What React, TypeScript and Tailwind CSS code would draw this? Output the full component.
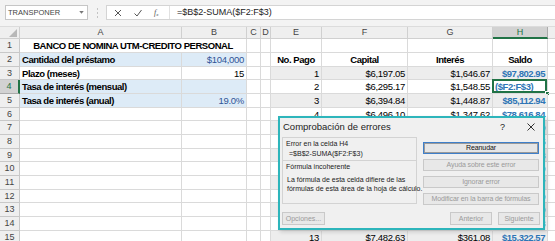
import React from "react";

type Cell = { t?: React.ReactNode; c?: string };

const colW = [
  "w-[20px]",
  "w-[162px]",
  "w-[65px]",
  "w-[14px]",
  "w-[10px]",
  "w-[51px]",
  "w-[86px]",
  "w-[85px]",
  "w-[55px]",
  "w-[60px]",
];
// last column is only a sliver at the right edge, its letter is off screen
const letters = ["", "A", "B", "C", "D", "E", "F", "G", "H", ""];

const rowH = [
  "h-[14px]",
  "h-[14px]",
  "h-[13px]",
  "h-[14px]",
  "h-[14px]",
  "h-[13px]",
  "h-[14px]",
  "h-[14px]",
  "h-[13px]",
  "h-[14px]",
  "h-[14px]",
  "h-[13px]",
  "h-[14px]",
  "h-[14px]",
  "h-[14px]",
];

// rows 5-12 sit under the dialog, only the saldo edge peeks out
const pagos: [number, string, string, string][] = [
  [1, "$6,197.05", "$1,646.67", "$97,802.95"],
  [2, "$6,295.17", "$1,548.55", ""],
  [3, "$6,394.84", "$1,448.87", "$85,112.94"],
  [4, "$6,496.10", "$1,347.62", "$78,616.84"],
  [5, "", "", "$72,017.89"],
  [6, "", "", "$65,314.45"],
  [7, "", "", "$58,504.88"],
  [8, "", "", "$51,587.49"],
  [9, "", "", "$44,560.57"],
  [10, "", "", "$37,422.39"],
  [11, "", "", "$30,171.19"],
  [12, "", "", "$22,805.18"],
  [13, "$7,482.63", "$361.08", "$15,322.57"],
];

const B = "font-bold tracking-[-0.45px]";

const leftRows: Record<number, [Cell, Cell]> = {
  2: [
    { t: "Cantidad del préstamo", c: `${B} bg-[#ddebf7]` },
    { t: "$104,000", c: "justify-end bg-[#ddebf7] text-[#2f5496]" },
  ],
  3: [{ t: "Plazo (meses)", c: B }, { t: "15", c: "justify-end" }],
  4: [
    { t: "Tasa de interés (mensual)", c: `${B} bg-[#ddebf7]` },
    { c: "bg-[#ddebf7]" },
  ],
  5: [
    { t: "Tasa de interés (anual)", c: `${B} bg-[#ddebf7]` },
    { t: "19.0%", c: "justify-end bg-[#ddebf7] text-[#2f5496]" },
  ],
};

function Box({ w, h, c, children }: { w: string; h: string; c?: string; children?: React.ReactNode }) {
  return (
    <div
      className={`${w} ${h} relative shrink-0 flex items-center pl-[2px] pr-[2px] pt-[1px] whitespace-nowrap border-r border-b border-[#dadada] ${c ?? ""}`}
    >
      {children}
    </div>
  );
}

function rightCells(r: number, h: string) {
  if (r === 2) {
    return [
      <Box key="e" w={colW[5]} h={h} c={`justify-center ${B} border-[#bfbfbf]`}>No. Pago</Box>,
      <Box key="f" w={colW[6]} h={h} c={`justify-center ${B} border-[#bfbfbf]`}>Capital</Box>,
      <Box key="g" w={colW[7]} h={h} c={`justify-center ${B} border-[#bfbfbf]`}>Interés</Box>,
      <Box key="h" w={colW[8]} h={h} c={`justify-center ${B} border-[#bfbfbf]`}>Saldo</Box>,
    ];
  }
  if (r < 3) {
    return [5, 6, 7, 8].map((i) => <Box key={i} w={colW[i]} h={h} />);
  }
  const [n, cap, int, saldo] = pagos[r - 3];
  const bg = n % 2 === 1 ? "bg-[#ededed]" : "bg-white";
  const hidden = n >= 5 && n <= 12;
  return [
    <Box key="e" w={colW[5]} h={h} c={`justify-end border-[#bfbfbf] ${bg}`}>{hidden ? "" : n}</Box>,
    <Box key="f" w={colW[6]} h={h} c={`justify-end border-[#bfbfbf] ${bg}`}>{cap}</Box>,
    <Box key="g" w={colW[7]} h={h} c={`justify-end border-[#bfbfbf] ${bg}`}>{int}</Box>,
    n === 2 ? (
      <Box key="h" w={colW[8]} h={h} c={`bg-white text-[#2e75b6] ${B}`}>
        ($F2:F$3)
        <div className="absolute -left-px -top-px right-0 bottom-0 border-2 border-[#217346]" />
        <div className="absolute -right-[3px] -bottom-[3px] w-[5px] h-[5px] bg-[#217346] border border-white" />
      </Box>
    ) : (
      <Box key="h" w={colW[8]} h={h} c={`justify-end border-[#bfbfbf] text-[#2e75b6] ${B} ${bg}`}>{saldo}</Box>
    ),
  ];
}

function Sheet() {
  return (
    <div className="flex flex-col text-[9.5px] tracking-[-0.3px] leading-none">
      <div className="flex h-[12px]">
        {letters.map((l, i) => (
          <div
            key={i}
            className={`${colW[i]} shrink-0 h-full flex items-center justify-center text-[9px] tracking-normal border-r border-b ${
              l === "H"
                ? "bg-[#d2d2d2] text-[#217346] border-b-2 border-b-[#217346] border-r-[#ababab]"
                : "bg-[#efefef] text-[#444] border-[#d0d0d0]"
            }`}
          >
            {i === 0 ? (
              <svg width="10" height="10" viewBox="0 0 10 10" className="ml-[6px] mt-[1px]">
                <polygon points="9,1 9,9 1,9" fill="#b8b8b8" />
              </svg>
            ) : (
              l
            )}
          </div>
        ))}
      </div>
      {rowH.map((h, idx) => {
        const r = idx + 1;
        const left = leftRows[r];
        return (
          <div key={r} className="flex">
            <div
              className={`${colW[0]} ${h} shrink-0 flex items-center justify-center text-[9px] tracking-normal border-b ${
                r === 4
                  ? "bg-[#d2d2d2] text-[#217346] border-r-2 border-r-[#217346] border-b-[#ababab]"
                  : "bg-[#efefef] text-[#444] border-r border-[#c8c8c8]"
              }`}
            >
              {r}
            </div>
            {r === 1 ? (
              <Box w="w-[227px]" h={h} c={`justify-center ${B}`}>
                BANCO DE NOMINA UTM-CREDITO PERSONAL
              </Box>
            ) : left ? (
              <>
                <Box w={colW[1]} h={h} c={left[0].c}>{left[0].t}</Box>
                <Box w={colW[2]} h={h} c={left[1].c}>{left[1].t}</Box>
              </>
            ) : (
              <>
                <Box w={colW[1]} h={h} />
                <Box w={colW[2]} h={h} />
              </>
            )}
            <Box w={colW[3]} h={h} />
            <Box w={colW[4]} h={h} />
            {rightCells(r, h)}
            <Box w={colW[9]} h={h} />
          </div>
        );
      })}
    </div>
  );
}

function TopBar() {
  return (
    <div className="h-[27px] bg-[#f3f3f3] border-b border-[#dcdcdc] flex items-start pt-[5px] pl-[5px]">
      <div className="w-[83px] h-[15px] bg-white border border-[#c6c6c6] flex items-center justify-between pl-[2px] pr-[3px] text-[7.5px] text-[#444]">
        <span>TRANSPONER</span>
        <svg width="5" height="3" viewBox="0 0 6 4">
          <polygon points="0,0 6,0 3,3.5" fill="#777" />
        </svg>
      </div>
      <div className="w-[18px] h-[15px] flex flex-col items-center justify-center gap-[2px]">
        <div className="w-[1px] h-[2px] bg-[#c4c4c4]" />
        <div className="w-[1px] h-[2px] bg-[#c4c4c4]" />
        <div className="w-[1px] h-[2px] bg-[#c4c4c4]" />
      </div>
      <div className="flex-1 h-[15px] bg-white border border-[#d4d4d4] border-r-0 flex items-center">
        <div className="w-[63px] h-full flex items-center pl-[7px] gap-[12px] border-r border-[#e1e1e1]">
          <svg width="8" height="8" viewBox="0 0 8 8">
            <path d="M1 1 L7 7 M7 1 L1 7" stroke="#555" strokeWidth="1" />
          </svg>
          <svg width="8" height="8" viewBox="0 0 8 8">
            <path d="M0.5 4.5 L3 7 L7.5 1" stroke="#555" strokeWidth="1" fill="none" />
          </svg>
          <span className="w-[8px] text-[8px] italic text-[#555] font-[family-name:'Liberation_Serif',serif]">
            f<sub className="text-[5px]">x</sub>
          </span>
        </div>
        <div className="pl-[7px] text-[9px] text-[#222]">=$B$2-SUMA($F2:F$3)</div>
      </div>
    </div>
  );
}

function Btn({ w, c, children }: { w: string; c?: string; children: React.ReactNode }) {
  return (
    <div
      className={`${w} h-[12px] flex items-center justify-center border whitespace-nowrap ${
        c ?? "bg-[#e8e8e8] border-[#c9c9c9] text-[#9a9a9a]"
      }`}
    >
      {children}
    </div>
  );
}

function Dialog() {
  return (
    <div className="absolute left-[278px] top-[116px] w-[267px] h-[114px] border-2 border-[#2db5bb] bg-[#f0f0f0] flex flex-col text-[7px] leading-[8px] text-[#222] shadow-[2px_2px_4px_rgba(0,0,0,0.15)]">
      <div className="h-[18px] flex items-center pl-[3px] pr-[8px]">
        <span className="text-[9.5px]">Comprobación de errores</span>
        <span className="ml-auto mr-[22px] text-[9px]">?</span>
        <svg width="8" height="8" viewBox="0 0 8 8">
          <path d="M0.5 0.5 L7.5 7.5 M7.5 0.5 L0.5 7.5" stroke="#333" strokeWidth="1" />
        </svg>
      </div>
      <div className="flex px-[2px] gap-[6px]">
        <div className="w-[135px] mt-[1px] flex flex-col">
          <div className="h-[24px] border border-[#d3d3d3] px-[3px] pt-[2px] flex flex-col gap-[2px]">
            <span>Error en la celda H4</span>
            <span className="pl-[3px]">=$B$2-SUMA($F2:F$3)</span>
          </div>
          <div className="h-[43px] border border-t-0 border-[#d3d3d3] px-[3px] pt-[2px] flex flex-col">
            <span>Fórmula incoherente</span>
            <div className="mt-[4px] pl-[1px] leading-[9px] whitespace-nowrap">
              La fórmula de esta celda difiere de las
              <br />
              fórmulas de esta área de la hoja de cálculo.
            </div>
          </div>
        </div>
        <div className="w-[116px] pt-[6px] flex flex-col gap-[5px] tracking-[-0.1px]">
          <Btn w="w-full" c="bg-[#e6e6e6] border-[#3f7fc9] text-[#111] shadow-[inset_0_0_0_1px_#9a9a9a]">
            Reanudar
          </Btn>
          <Btn w="w-full">Ayuda sobre este error</Btn>
          <Btn w="w-full">Ignorar error</Btn>
          <Btn w="w-full">Modificar en la barra de fórmulas</Btn>
        </div>
      </div>
      <div className="mt-auto flex items-center pl-[2px] pr-[3px] pb-[3px] gap-[6px]">
        <div className="w-[43px] h-[13px] flex items-center justify-center border border-[#c9c9c9] bg-[#e8e8e8] text-[#9a9a9a]">
          Opciones...
        </div>
        <div className="ml-auto w-[42px] h-[13px] flex items-center justify-center border border-[#c9c9c9] bg-[#e8e8e8] text-[#9a9a9a]">
          Anterior
        </div>
        <div className="w-[42px] h-[13px] flex items-center justify-center border border-[#c9c9c9] bg-[#e8e8e8] text-[#9a9a9a]">
          Siguiente
        </div>
      </div>
    </div>
  );
}

export default function App() {
  return (
    <div className="relative w-[555px] h-[241px] overflow-hidden bg-white text-black font-[family-name:'Liberation_Sans',Arial,sans-serif]">
      <TopBar />
      <Sheet />
      <Dialog />
    </div>
  );
}
